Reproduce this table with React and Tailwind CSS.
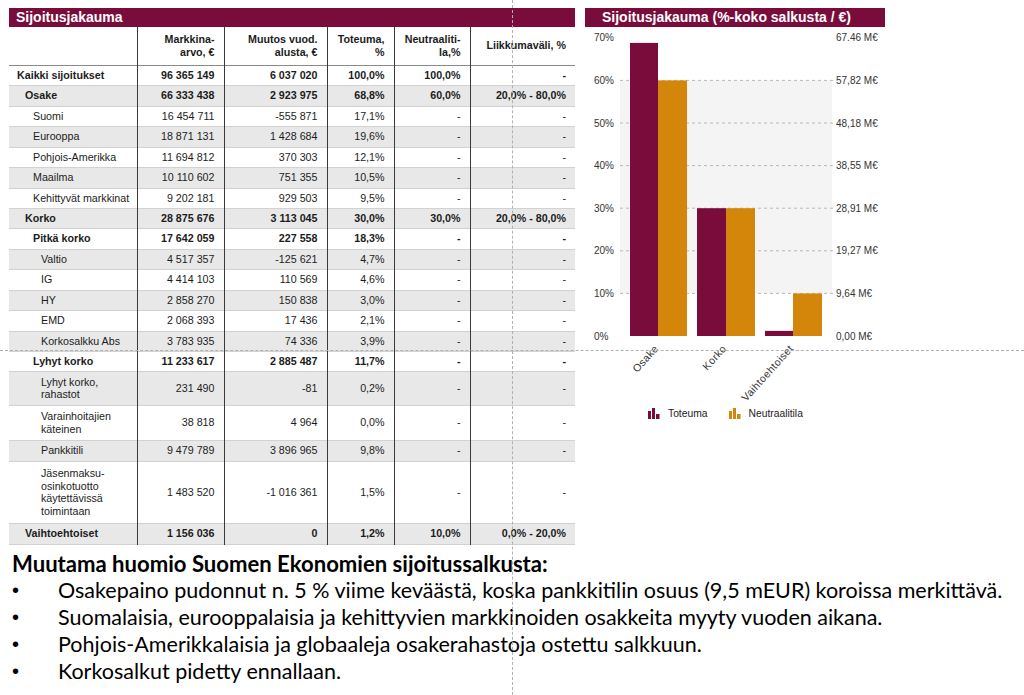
import React from 'react';

const MAROON = '#7a0c3c';
const ORANGE = '#d4860b';

// Table rows: level sets the indent, h the row height (px)
const rows = [
  { label: 'Kaikki sijoitukset', lvl: 0, bold: true, h: 20, v: ['96 365 149', '6 037 020', '100,0%', '100,0%', '-'] },
  { label: 'Osake', lvl: 1, bold: true, h: 21, v: ['66 333 438', '2 923 975', '68,8%', '60,0%', '20,0% - 80,0%'] },
  { label: 'Suomi', lvl: 2, h: 20, v: ['16 454 711', '-555 871', '17,1%', '-', '-'] },
  { label: 'Eurooppa', lvl: 2, h: 21, v: ['18 871 131', '1 428 684', '19,6%', '-', '-'] },
  { label: 'Pohjois-Amerikka', lvl: 2, h: 20, v: ['11 694 812', '370 303', '12,1%', '-', '-'] },
  { label: 'Maailma', lvl: 2, h: 21, v: ['10 110 602', '751 355', '10,5%', '-', '-'] },
  { label: 'Kehittyvät markkinat', lvl: 2, h: 20, v: ['9 202 181', '929 503', '9,5%', '-', '-'] },
  { label: 'Korko', lvl: 1, bold: true, h: 20, v: ['28 875 676', '3 113 045', '30,0%', '30,0%', '20,0% - 80,0%'] },
  { label: 'Pitkä korko', lvl: 2, bold: true, h: 21, v: ['17 642 059', '227 558', '18,3%', '-', '-'] },
  { label: 'Valtio', lvl: 3, h: 20, v: ['4 517 357', '-125 621', '4,7%', '-', '-'] },
  { label: 'IG', lvl: 3, h: 21, v: ['4 414 103', '110 569', '4,6%', '-', '-'] },
  { label: 'HY', lvl: 3, h: 20, v: ['2 858 270', '150 838', '3,0%', '-', '-'] },
  { label: 'EMD', lvl: 3, h: 21, v: ['2 068 393', '17 436', '2,1%', '-', '-'] },
  { label: 'Korkosalkku Abs', lvl: 3, h: 20, v: ['3 783 935', '74 336', '3,9%', '-', '-'] },
  { label: 'Lyhyt korko', lvl: 2, bold: true, h: 20, v: ['11 233 617', '2 885 487', '11,7%', '-', '-'] },
  { label: ['Lyhyt korko,', 'rahastot'], lvl: 3, h: 34, v: ['231 490', '-81', '0,2%', '-', '-'] },
  { label: ['Varainhoitajien', 'käteinen'], lvl: 3, h: 35, v: ['38 818', '4 964', '0,0%', '-', '-'] },
  { label: 'Pankkitili', lvl: 3, h: 21, v: ['9 479 789', '3 896 965', '9,8%', '-', '-'] },
  { label: ['Jäsenmaksu-', 'osinkotuotto', 'käytettävissä', 'toimintaan'], lvl: 3, h: 62, v: ['1 483 520', '-1 016 361', '1,5%', '-', '-'] },
  { label: 'Vaihtoehtoiset', lvl: 1, bold: true, h: 21, v: ['1 156 036', '0', '1,2%', '10,0%', '0,0% - 20,0%'] },
];

const indent = ['pl-[8px]', 'pl-[16px]', 'pl-[24px]', 'pl-[32px]'];

const headers = [
  ['Markkina-', 'arvo, €'],
  ['Muutos vuod.', 'alusta, €'],
  ['Toteuma,', '%'],
  ['Neutraaliti-', 'la,%'],
  ['Liikkumaväli, %'],
];

const AllocationTable = () => (
  <div className="w-[566px]">
    <div className="h-[19px] flex items-center pl-[7px] text-[14px] font-bold text-white bg-[#7a0c3c]">
      Sijoitusjakauma
    </div>
    <table className="table-fixed border-collapse w-[566px] text-[10.7px] text-[#1c1c1c]">
      <colgroup>
        <col className="w-[128px]" />
        <col className="w-[87px]" />
        <col className="w-[103px]" />
        <col className="w-[67px]" />
        <col className="w-[76px]" />
        <col className="w-[105px]" />
      </colgroup>
      <thead>
        <tr className="h-[38px] border-b border-[#8a8a8a]">
          <th className="border-r border-[#3a3a3a]" />
          {headers.map((lines, i) => (
            <th
              key={i}
              className={`text-right font-bold leading-[13px] pr-[9px] align-middle ${i < 4 ? 'border-r border-[#3a3a3a]' : ''}`}
            >
              {lines.map((l, j) => (
                <div key={j}>{l}</div>
              ))}
            </th>
          ))}
        </tr>
      </thead>
      <tbody>
        {rows.map((r, idx) => (
          <tr
            key={idx}
            style={{ height: r.h }}
            className={`border-b border-[#d2d2d2] ${idx % 2 === 1 ? 'bg-[#e8e8e8]' : 'bg-white'} ${r.bold ? 'font-bold' : ''}`}
          >
            <td className={`${indent[r.lvl]} leading-[12.5px] border-r border-[#3a3a3a] align-middle`}>
              {Array.isArray(r.label) ? r.label.map((l, j) => <div key={j}>{l}</div>) : r.label}
            </td>
            {r.v.map((val, i) => (
              <td
                key={i}
                className={`text-right pr-[9px] align-middle ${i < 4 ? 'border-r border-[#3a3a3a]' : ''}`}
              >
                {val}
              </td>
            ))}
          </tr>
        ))}
      </tbody>
    </table>
  </div>
);

// chart geometry (local svg coords)
const base = 309;
const per = 4.26; // px per percent
const yOf = (p) => base - p * per;

const bars = [
  { x: 45, w: 28, p: 68.8, c: MAROON },
  { x: 73, w: 29, p: 60, c: ORANGE },
  { x: 112, w: 29, p: 30, c: MAROON },
  { x: 141, w: 29, p: 30, c: ORANGE },
  { x: 180, w: 28, p: 1.2, c: MAROON },
  { x: 208, w: 29, p: 10, c: ORANGE },
];

const leftTicks = ['0%', '10%', '20%', '30%', '40%', '50%', '60%', '70%'];
const rightTicks = ['0,00 M€', '9,64 M€', '19,27 M€', '28,91 M€', '38,55 M€', '48,18 M€', '57,82 M€', '67.46 M€'];

const cats = [
  { t: 'Osake', x: 74 },
  { t: 'Korko', x: 142 },
  { t: 'Vaihtoehtoiset', x: 209 },
];

const LegendIcon = ({ color }) => (
  <svg width="12" height="11" viewBox="0 0 12 11">
    <rect x="0" y="3" width="3" height="8" fill={color} />
    <rect x="4" y="0" width="3" height="11" fill={color} />
    <rect x="8" y="6" width="3.5" height="5" fill={color} />
  </svg>
);

const AllocationChart = () => (
  <div className="w-[300px] ml-[10px]">
    <div className="h-[19px] flex items-center pl-[17px] text-[14px] font-bold text-white bg-[#7a0c3c]">
      Sijoitusjakauma (%-koko salkusta / €)
    </div>
    <svg width="300" height="375" className="block" style={{ fontFamily: '"Liberation Sans", Arial, sans-serif' }}>
      <rect x="35" y={yOf(60)} width="212" height={yOf(10) - yOf(60)} fill="#f4f4f4" />
      {[10, 20, 30, 40, 50, 60].map((p) => (
        <line key={p} x1="35" x2="250" y1={yOf(p)} y2={yOf(p)} stroke="#b8b8b8" strokeWidth="1" strokeDasharray="3 3" />
      ))}
      {bars.map((b, i) => (
        <rect key={i} x={b.x} y={yOf(b.p)} width={b.w} height={b.p * per} fill={b.c} />
      ))}
      {leftTicks.map((t, i) => (
        <text key={t} x="9" y={yOf(i * 10) + 3.5} fontSize="10" fill="#333">{t}</text>
      ))}
      {rightTicks.map((t, i) => (
        <text key={t} x="251" y={yOf(i * 10) + 3.5} fontSize="10" fill="#333">{t}</text>
      ))}
      {cats.map((c) => (
        <text
          key={c.t}
          x={c.x}
          y="322"
          fontSize="10.5"
          letterSpacing="0.4"
          fill="#333"
          textAnchor="end"
          transform={`rotate(-48 ${c.x} 322)`}
        >
          {c.t}
        </text>
      ))}
    </svg>
    <div className="flex items-center mt-[4px] pl-[63px] text-[10.3px] text-[#222]">
      <LegendIcon color={MAROON} />
      <span className="ml-[8px]">Toteuma</span>
      <span className="ml-[21px]">
        <LegendIcon color={ORANGE} />
      </span>
      <span className="ml-[8px]">Neutraalitila</span>
    </div>
  </div>
);

const bullets = [
  'Osakepaino pudonnut n. 5 % viime keväästä, koska pankkitilin osuus (9,5 mEUR) koroissa merkittävä.',
  'Suomalaisia, eurooppalaisia ja kehittyvien markkinoiden osakkeita myyty vuoden aikana.',
  'Pohjois-Amerikkalaisia ja globaaleja osakerahastoja ostettu salkkuun.',
  'Korkosalkut pidetty ennallaan.',
];

const Notes = () => (
  <div className="mt-[5px] pl-[12px] text-[21.5px] leading-[27px] text-black" style={{ fontFamily: 'Lato, "Open Sans", sans-serif' }}>
    <div className="font-bold text-[22.1px]">Muutama huomio Suomen Ekonomien sijoitussalkusta:</div>
    {bullets.map((b) => (
      <div key={b} className="flex">
        <span className="w-[46px] shrink-0 text-[20px]" style={{ fontFamily: '"Liberation Sans", Arial, sans-serif' }}>•</span>
        <span>{b}</span>
      </div>
    ))}
  </div>
);

const App = () => (
  <div
    className="relative w-[1024px] h-[695px] bg-white overflow-hidden"
    style={{ fontFamily: '"Liberation Sans", Arial, sans-serif' }}
  >
    <div className="flex items-start pt-[8px] pl-[9px]">
      <AllocationTable />
      <AllocationChart />
    </div>
    <Notes />

    {/* slide guides */}
    <div className="absolute left-[512px] top-0 h-[695px] border-l border-dashed border-[#b0b0b0]" />
    <div className="absolute top-[350px] left-0 w-[1024px] border-t border-dashed border-[#b0b0b0]" />
  </div>
);

export default App;
